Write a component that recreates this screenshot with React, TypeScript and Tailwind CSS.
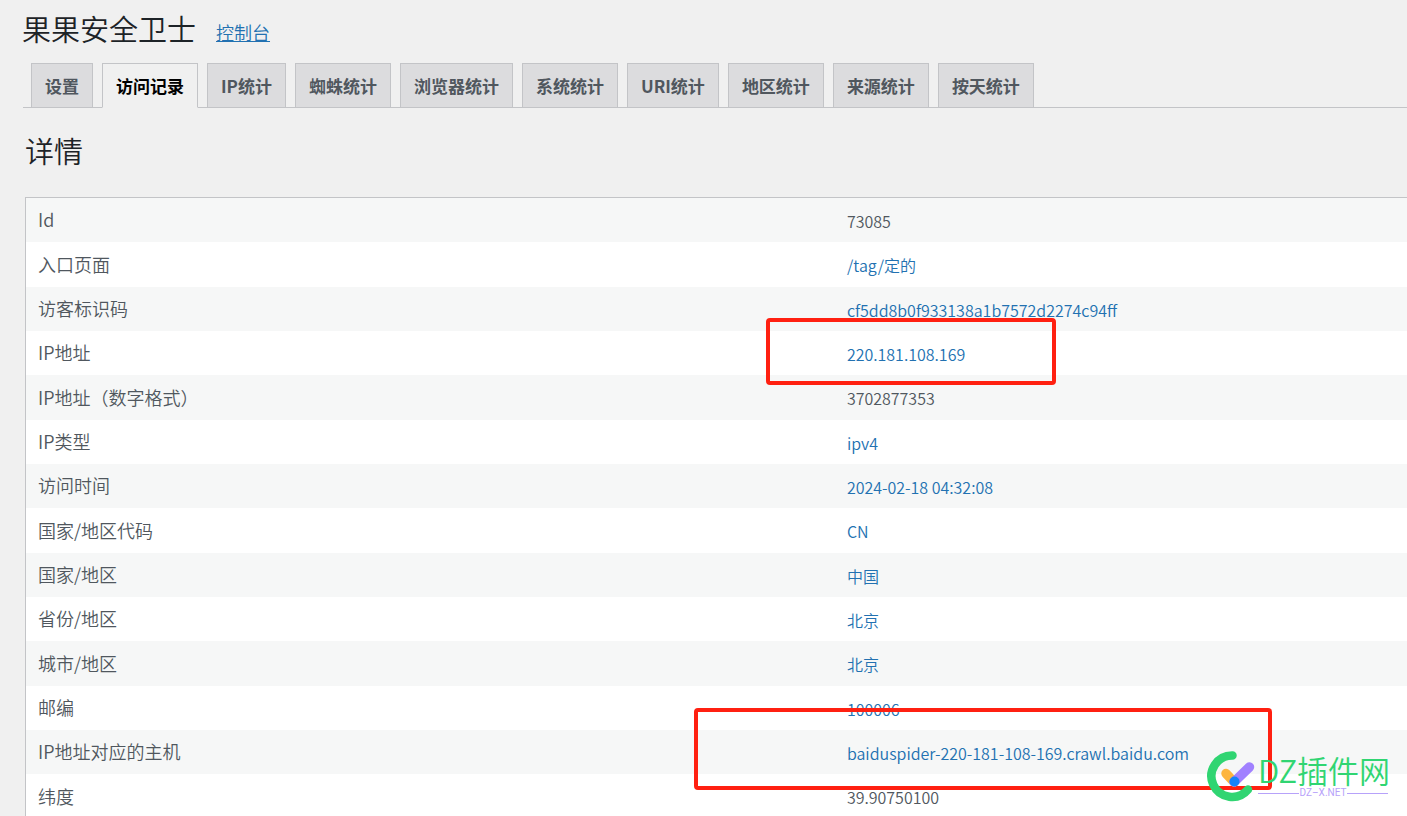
type Tab = { label: string; active?: boolean };
type Row = { label: string; value: string; link?: boolean; mark?: string };

const tabs: Tab[] = [
  { label: '设置' },
  { label: '访问记录', active: true },
  { label: 'IP统计' },
  { label: '蜘蛛统计' },
  { label: '浏览器统计' },
  { label: '系统统计' },
  { label: 'URI统计' },
  { label: '地区统计' },
  { label: '来源统计' },
  { label: '按天统计' },
];

const rows: Row[] = [
  { label: 'Id', value: '73085' },
  { label: '入口页面', value: '/tag/定的', link: true },
  { label: '访客标识码', value: 'cf5dd8b0f933138a1b7572d2274c94ff', link: true },
  { label: 'IP地址', value: '220.181.108.169', link: true, mark: '-top-[13px] -left-[68px] h-[67px] w-[290px]' },
  { label: 'IP地址（数字格式）', value: '3702877353' },
  { label: 'IP类型', value: 'ipv4', link: true },
  { label: '访问时间', value: '2024-02-18 04:32:08', link: true },
  { label: '国家/地区代码', value: 'CN', link: true },
  { label: '国家/地区', value: '中国', link: true },
  { label: '省份/地区', value: '北京', link: true },
  { label: '城市/地区', value: '北京', link: true },
  { label: '邮编', value: '100006', link: true },
  {
    label: 'IP地址对应的主机',
    value: 'baiduspider-220-181-108-169.crawl.baidu.com',
    link: true,
    mark: '-top-[22px] -left-[140px] h-[82px] w-[578px]',
  },
  { label: '纬度', value: '39.90750100' },
];

function Watermark() {
  return (
    <div className="absolute right-[19px] bottom-[14px] z-20 flex items-end">
      <svg width="52" height="52" viewBox="0 0 52 52" fill="none" strokeLinecap="round" aria-hidden="true">
        <path d="M26.500 5.500A20.700 20.700 0 1 0 42 39.500" stroke="#30d572" strokeWidth="8.500" />
        <path d="M20 23.500L28 32" stroke="#fdb53f" strokeWidth="9.500" />
        <path d="M28 32L43.500 17" stroke="#a181ff" strokeWidth="9.500" />
        <circle cx="28.500" cy="31.500" r="5" fill="#1683fb" />
      </svg>
      <div className="flex w-[130px] flex-col">
        <span className="text-[31px] leading-[34px] whitespace-nowrap text-[#30d572]">DZ插件网</span>
        <span className="mb-[3px] flex items-center gap-px font-['Roboto',sans-serif] text-[10px] leading-[12px] font-normal text-[#b7a2fa]">
          <span className="h-px flex-1 bg-[#b7a2fa]" />
          DZ–X.NET
          <span className="h-px flex-1 bg-[#b7a2fa]" />
        </span>
      </div>
    </div>
  );
}

export default function App() {
  return (
    <main className="relative h-screen overflow-hidden bg-[#f0f0f0] font-['Noto_Sans_CJK_SC',sans-serif] font-[350] text-[#50575e]">
      <header className="flex h-[63px] items-start gap-[20px] pt-[9px] pl-[22px]">
        <h1 className="text-[29px] leading-[38px] font-[350] text-[#1d2327]">果果安全卫士</h1>
        <a href="#dashboard" className="pt-[10px] text-[18px] leading-[26px] text-[#2271b1] underline">
          控制台
        </a>
      </header>

      <nav className="ml-[23px] flex h-[45px] gap-[9px] border-b border-[#c3c4c7] pl-2">
        {tabs.map((tab) => (
          <a
            key={tab.label}
            href="#tab"
            className={
              tab.active
                ? '-mb-px border border-[#c3c4c7] border-b-[#f0f0f0] bg-[#f0f0f0] px-[13px] pt-[8px] text-[17px] leading-[28px] font-bold whitespace-nowrap text-black'
                : 'border border-b-0 border-[#c3c4c7] bg-[#dcdcde] px-[13px] pt-[8px] text-[17px] leading-[28px] font-bold whitespace-nowrap text-[#50575e]'
            }
          >
            {tab.label}
          </a>
        ))}
      </nav>

      <section className="pl-[25px]">
        <h2 className="pt-[23px] pb-[28px] text-[29px] leading-[38px] font-[350] text-[#1d2327]">详情</h2>
        <table className="w-full table-fixed border-separate border-spacing-0 border-t border-l border-[#c3c4c7] text-left">
          <colgroup>
            <col className="w-[58.5%]" />
            <col />
          </colgroup>
          <tbody>
            {rows.map((row) => (
              <tr key={row.label} className="h-[44px] bg-white odd:bg-[#f6f7f7] nth-[3n+2]:h-[45px]">
                <th scope="row" className="px-[12px] pt-0 pb-[2px] text-[18px] leading-[28px] font-[350]">
                  {row.label}
                </th>
                <td className="relative px-[13px] pt-px pb-0 text-[16px] leading-[24px]">
                  {row.link ? (
                    <a href="#filter" className="text-[#2271b1]">
                      {row.value}
                    </a>
                  ) : (
                    row.value
                  )}
                  {row.mark && (
                    <span
                      className={`pointer-events-none absolute z-10 rounded-[4px] border-4 border-[#ff2011] ${row.mark}`}
                    />
                  )}
                </td>
              </tr>
            ))}
          </tbody>
        </table>
      </section>

      <Watermark />
    </main>
  );
}
